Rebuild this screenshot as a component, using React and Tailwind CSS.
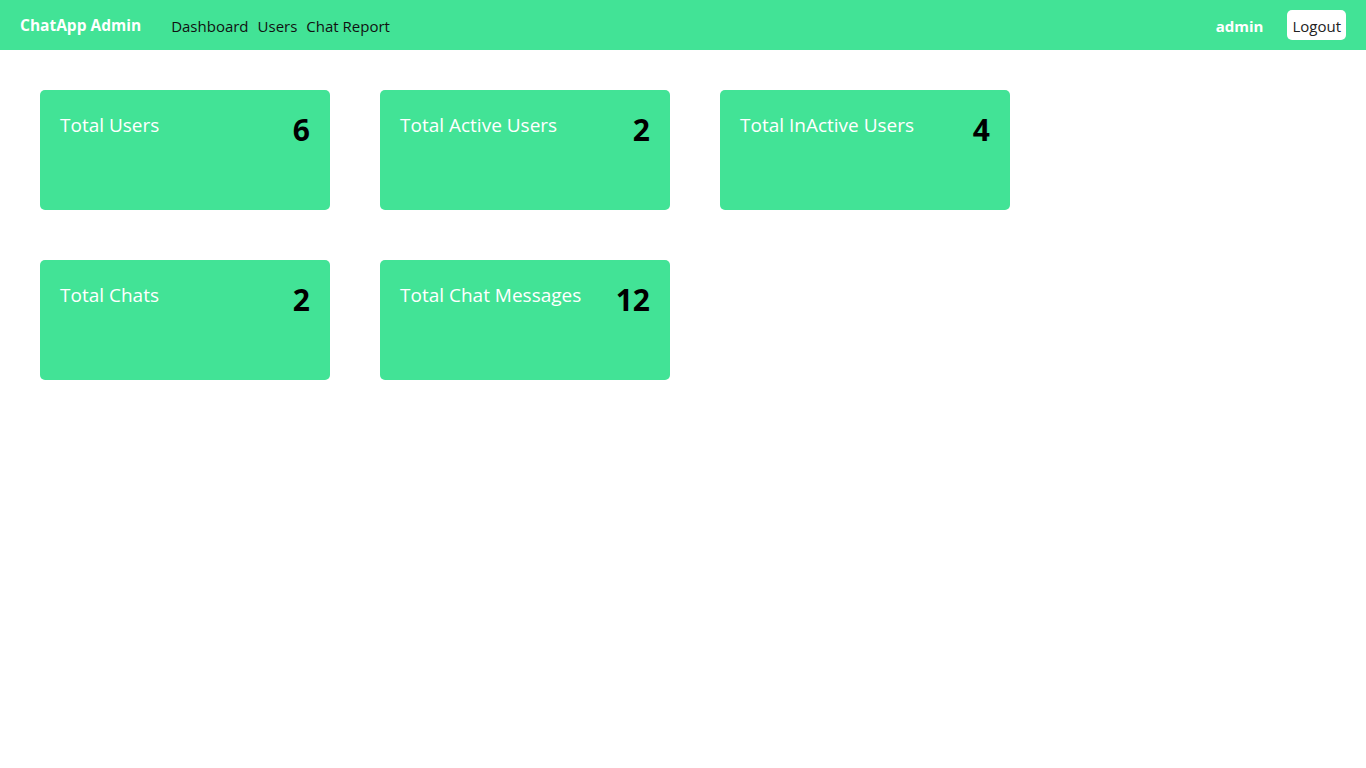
const STATS = [
  [
    { label: 'Total Users', value: 6 },
    { label: 'Total Active Users', value: 2 },
    { label: 'Total InActive Users', value: 4 },
  ],
  [
    { label: 'Total Chats', value: 2 },
    { label: 'Total Chat Messages', value: 12 },
  ],
]

function StatCard({ label, value }) {
  return (
    <div className="w-[290px] h-[120px] bg-[#42e396] rounded-[5px] px-5 pt-[22px] flex justify-between items-start">
      <span className="text-white text-[19px] leading-[26px]">{label}</span>
      <span className="text-black font-bold text-[30px] leading-[38px] mt-[-1px]">{value}</span>
    </div>
  )
}

export default function App() {
  return (
    <div className="min-h-screen bg-white font-['Open_Sans','Noto_Sans',sans-serif]">
      <nav className="h-[50px] bg-[#42e396] flex items-center px-5">
        <span className="text-white font-bold text-[15.5px] pt-[2px]">ChatApp Admin</span>
        <div className="flex gap-[9px] ml-[30px] text-[#111] text-[15px] pt-[2px]">
          <a href="#">Dashboard</a>
          <a href="#">Users</a>
          <a href="#">Chat Report</a>
        </div>
        <div className="ml-auto flex items-center">
          <span className="text-white font-bold text-[15px] pt-[2px]">admin</span>
          <button className="ml-6 bg-white rounded-[5px] h-[30px] px-[5px] text-[15px] text-[#222] pt-[2px]">Logout</button>
        </div>
      </nav>
      <main className="px-10 pt-10 flex flex-col gap-[50px]">
        {STATS.map((row, i) => (
          <div key={i} className="flex gap-[50px]">
            {row.map((s) => (
              <StatCard key={s.label} {...s} />
            ))}
          </div>
        ))}
      </main>
    </div>
  )
}
